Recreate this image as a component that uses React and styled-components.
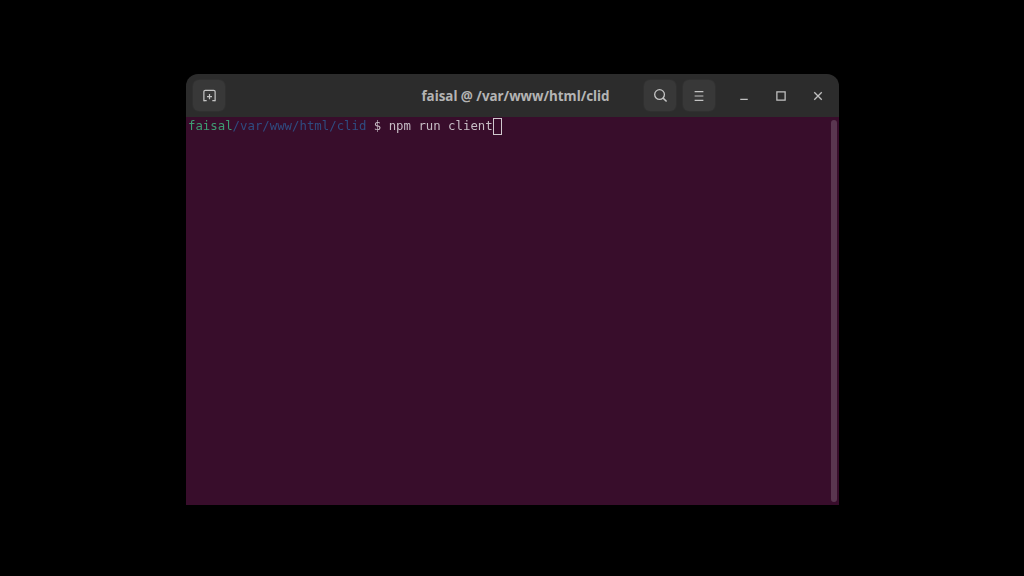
import React from "react";
import styled, { createGlobalStyle } from "styled-components";

const Global = createGlobalStyle`
  html, body { margin: 0; padding: 0; background: #000; }
  #root { width: 1024px; height: 576px; overflow: hidden; }
`;

const Desktop = styled.div`
  width: 1024px;
  height: 576px;
  background: #000;
  padding: 74px 0 0 186px;
  box-sizing: border-box;
`;

const Window = styled.div`
  width: 653px;
  height: 431px;
  display: flex;
  flex-direction: column;
  border-radius: 12px 12px 0 0;
  overflow: hidden;
`;

const HeaderBar = styled.header`
  flex: 0 0 43px;
  display: grid;
  grid-template-columns: 1fr auto 1fr;
  align-items: center;
  padding: 0 3px 0 7px;
  background: #2c2c2c;
`;

const Side = styled.div`
  display: flex;
  align-items: center;
  justify-content: ${(p) => (p.$end ? "flex-end" : "flex-start")};
`;

const HeaderButton = styled.div`
  width: 32px;
  height: 31px;
  margin-left: ${(p) => p.$gap || 0}px;
  display: flex;
  align-items: center;
  justify-content: center;
  border-radius: 6px;
  background: #383838;
  box-shadow: 0 0 0 1px #303030;
  color: #c4c4c4;
`;

const Title = styled.div`
  font: 700 13.4px "Noto Sans", "Open Sans", sans-serif;
  color: #b4b4b4;
  white-space: nowrap;
  transform: translateX(1px);
`;

const WindowControl = styled.div`
  width: 37px;
  height: 31px;
  display: flex;
  align-items: center;
  justify-content: center;
  color: #c0c0c0;
`;

const Terminal = styled.main`
  flex: 1;
  display: flex;
  background: #380d2b;
  filter: none;
`;

const Content = styled.div`
  flex: 1;
  padding: 2px 0 0 2px;
  font: 12.35px/15px "DejaVu Sans Mono", monospace;
  color: #c6bcc4;
  white-space: pre;
  display: flex;
  align-items: flex-start;
`;

const Line = styled.div`
  display: flex;
  align-items: center;
  height: 15px;
  filter: blur(0.35px);
`;

const User = styled.span`
  color: #3e9c72;
`;

const Path = styled.span`
  color: #2f4c80;
`;

const Cursor = styled.span`
  display: block;
  box-sizing: border-box;
  width: 9px;
  height: 17px;
  border: 1px solid #d0c8ce;
`;

const ScrollTrack = styled.div`
  flex: 0 0 9px;
  padding: 3px 2px 3px 0;
  display: flex;
  box-sizing: border-box;
`;

const ScrollThumb = styled.div`
  width: 6px;
  margin-left: 1px;
  border-radius: 3px;
  background: #5a3650;
`;

const Icon = ({ size = 14, children }) => (
  <svg width={size} height={size} viewBox="0 0 16 16" fill="none" stroke="currentColor" strokeWidth="1.3">
    {children}
  </svg>
);

export default function App() {
  return (
    <>
      <Global />
      <Desktop>
        <Window>
          <HeaderBar>
            <Side>
              <HeaderButton>
                <Icon size={15}>
                  <path d="M2 14 V4 a1.5 1.5 0 0 1 1.5-1.5 h9 a1.5 1.5 0 0 1 1.5 1.5 V14" />
                  <path d="M2 13.5 h3 M11 13.5 h3" />
                  <path d="M8 6.5 V12 M5.3 9.3 H10.7" />
                </Icon>
              </HeaderButton>
            </Side>
            <Title>faisal @ /var/www/html/clid</Title>
            <Side $end>
              <HeaderButton>
                <Icon size={15}>
                  <circle cx="7" cy="7" r="5.2" strokeWidth="1.4" />
                  <path d="M10.8 10.8 L14.5 14.5" strokeWidth="1.6" />
                </Icon>
              </HeaderButton>
              <HeaderButton $gap={7}>
                <Icon size={14}>
                  <path d="M3 3 H13 M3 8 H13 M3 13 H13" />
                </Icon>
              </HeaderButton>
              <WindowControl style={{ marginLeft: 10 }}>
                <Icon size={12}>
                  <path d="M3 12.5 H13" strokeWidth="1.6" />
                </Icon>
              </WindowControl>
              <WindowControl>
                <Icon size={12}>
                  <rect x="2.5" y="2.5" width="11" height="11" strokeWidth="1.7" />
                </Icon>
              </WindowControl>
              <WindowControl>
                <Icon size={12}>
                  <path d="M3 3 L13 13 M13 3 L3 13" strokeWidth="1.8" />
                </Icon>
              </WindowControl>
            </Side>
          </HeaderBar>
          <Terminal>
            <Content>
              <Line>
                <User>faisal</User>
                <Path>/var/www/html/clid</Path>
                <span> $ npm run client</span>
                <Cursor />
              </Line>
            </Content>
            <ScrollTrack>
              <ScrollThumb />
            </ScrollTrack>
          </Terminal>
        </Window>
      </Desktop>
    </>
  );
}
